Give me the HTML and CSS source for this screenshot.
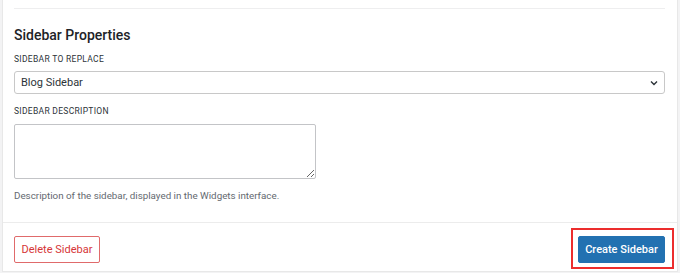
FILE: index.html
```html
<!DOCTYPE html>
<html lang="en">
<head>
    <meta charset="UTF-8">
    <title>Sidebar Properties</title>
    <link rel="stylesheet" href="styles.css">
</head>
<body>
    <div class="panel">
        <div class="panel-body">
            <hr class="divider">
            <h2 class="section-title">Sidebar Properties</h2>

            <label class="field-label" for="replace">Sidebar to Replace</label>
            <div class="select-wrap">
                <select id="replace" class="select">
                    <option>Blog Sidebar</option>
                </select>
                <svg class="chevron" width="8" height="6" viewBox="0 0 8 6">
                    <path d="M1 1.5 L4 4.5 L7 1.5" fill="none" stroke="#2c3338" stroke-width="1.4"/>
                </svg>
            </div>

            <label class="field-label label-gap" for="description">Sidebar Description</label>
            <textarea id="description" class="textarea"></textarea>
            <p class="help">Description of the sidebar, displayed in the Widgets interface.</p>
        </div>

        <div class="panel-footer">
            <button class="btn btn-delete" type="button">Delete Sidebar</button>
            <span class="highlight">
                <button class="btn btn-primary" type="button">Create Sidebar</button>
            </span>
        </div>
    </div>
</body>
</html>
```

FILE: styles.css
```css
body {
    margin: 0;
    background: #f3f3f4;
    font-family: Roboto, "Liberation Sans", sans-serif;
    color: #1d2327;
}

.panel {
    margin-left: 2px;
    width: 674px;
    height: 271px;
    background: #fff;
    border: 1px solid #e8e8e8;
    border-top: none;
}

.panel-body {
    padding: 8px 12px 0 11px;
    height: 214px;
    border-bottom: 1px solid #ececec;
}

.divider {
    margin: 0;
    border: none;
    border-top: 1px solid #eeeeef;
}

.section-title {
    margin: 16px 0 0;
    font-size: 14px;
    font-weight: 500;
    line-height: 20px;
}

.field-label {
    display: block;
    margin-top: 7px;
    font-size: 8.5px;
    line-height: 14px;
    letter-spacing: 0.3px;
    text-transform: uppercase;
    color: #2c3338;
}

.label-gap {
    margin-top: 10px;
}

.select-wrap {
    position: relative;
    margin-top: 5px;
}

.select {
    display: block;
    width: 100%;
    height: 23px;
    padding: 0 6px;
    font-family: inherit;
    font-size: 11px;
    color: #2c3338;
    background: #fff;
    border: 1px solid #c8c8c8;
    border-radius: 3px;
    appearance: none;
}

.chevron {
    position: absolute;
    right: 7px;
    top: 9px;
}

.textarea {
    display: block;
    box-sizing: border-box;
    width: 302px;
    height: 55px;
    margin-top: 6px;
    border: 1px solid #c3c4c7;
    border-radius: 2px;
}

.help {
    margin: 9px 0 0;
    font-size: 9.8px;
    line-height: 16px;
    color: #646970;
}

.panel-footer {
    display: flex;
    justify-content: space-between;
    align-items: center;
    padding: 13px 12px 0 11px;
}

.btn {
    height: 27px;
    padding: 0;
    font-family: inherit;
    font-size: 11px;
    white-space: nowrap;
    border-radius: 2px;
    cursor: pointer;
}

.btn-delete {
    width: 86px;
    background: #fff;
    color: #d63638;
    border: 1px solid #e06a6b;
}

.btn-primary {
    display: block;
    width: 87px;
    background: #2271b1;
    color: #fff;
    font-weight: 500;
    border: 1px solid #2271b1;
}

.highlight {
    position: relative;
}

.highlight::after {
    content: "";
    position: absolute;
    top: -8px;
    left: -7px;
    right: -9px;
    bottom: -6px;
    border: 2px solid #ec2d2d;
}
```
